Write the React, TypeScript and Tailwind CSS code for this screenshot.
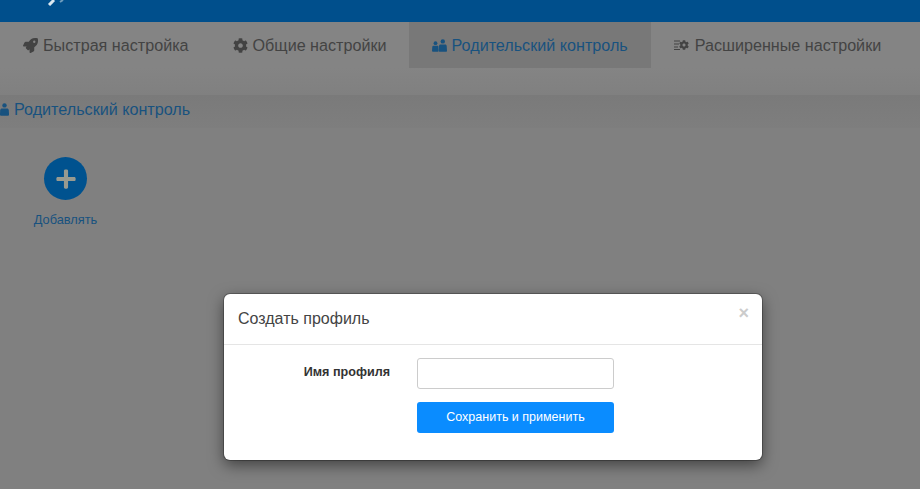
import { FaCog, FaPlus, FaRocket } from 'react-icons/fa';
import type { ReactNode } from 'react';

const FONT = "font-['Liberation_Sans',Arial,sans-serif]";

function AdvancedIcon() {
  return (
    <span className="flex w-[16px] shrink-0 items-center">
      <svg width="6" height="10" viewBox="0 0 6 10" fill="none">
        <path d="M0 1h6M0 4h5M0 7h4M0 9.5h6" stroke="currentColor" strokeWidth="1.2" />
      </svg>
      <FaCog className="-ml-px size-[10px]" />
    </span>
  );
}

function PersonIcon() {
  return (
    <svg width="9" height="13" viewBox="0 0 9 13" className="shrink-0" fill="currentColor">
      <circle cx="4.5" cy="2.4" r="2.2" />
      <path d="M2 5.4h5c1 0 1.6.7 1.8 1.7l.2 4.4c0 .8-.5 1.3-1.3 1.3H1.300C.5 12.800 0 12.300 0 11.500l.2-4.400C.4 6.100 1 5.400 2 5.400z" />
    </svg>
  );
}

function ParentsIcon() {
  return (
    <svg width="15" height="13" viewBox="0 0 15 13" className="shrink-0" fill="currentColor">
      <circle cx="3.500" cy="4.200" r="1.900" />
      <path d="M1.500 6.800h4c.5 0 .9.400.9 1l.2 4.200c0 .5-.3.800-.8.800H1c-.6 0-1-.3-1-.8l.3-4.200c.1-.6.500-1 1.200-1z" />
      <circle cx="10.800" cy="2.400" r="2.200" />
      <path d="M8.500 5.400h4.600c1 0 1.500.7 1.600 1.600l.3 4.700c0 .7-.4 1.100-1.100 1.100H7.900c-.7 0-1.100-.4-1.100-1.100l.2-4.700c.1-.9.600-1.600 1.500-1.600z" />
    </svg>
  );
}

interface TabProps {
  icon: ReactNode;
  label: string;
  active?: boolean;
  className?: string;
}

function Tab({ icon, label, active, className = 'pr-[23px]' }: TabProps) {
  return (
    <div
      className={`flex h-[46px] items-center gap-[5px] pl-[23px] text-[16.15px] ${className} ${
        active ? 'bg-[#787878] text-[#18527f]' : 'text-[#434343]'
      }`}
    >
      {icon}
      <span>{label}</span>
    </div>
  );
}

export default function App() {
  return (
    <div className={`relative h-[489px] w-[920px] overflow-hidden bg-[#808080] ${FONT}`}>
      {/* Top bar */}
      <div className="relative h-[22px] bg-[#004f8c]">
        <svg width="20" height="6" viewBox="0 0 20 6" className="absolute left-[46px] top-0">
          <path d="M3 5 L8 0" stroke="#dbe8f0" strokeWidth="3" />
          <path d="M14 2 L17 0" stroke="#6f9dbd" strokeWidth="2" />
        </svg>
      </div>

      {/* Tabs */}
      <div className="flex bg-[#848484]">
        <Tab icon={<FaRocket className="size-[15px] shrink-0" />} label="Быстрая настройка" className="pr-[21px]" />
        <Tab icon={<FaCog className="size-[15px] shrink-0" />} label="Общие настройки" className="pr-[22px]" />
        <Tab icon={<ParentsIcon />} label="Родительский контроль" active />
        <Tab icon={<AdvancedIcon />} label="Расширенные настройки" />
      </div>

      {/* Section header */}
      <div className="h-[27px] bg-gradient-to-b from-[#848484] to-[#808080]" />
      <div className="flex h-[33px] items-center gap-[6px] bg-gradient-to-b from-[#7a7a7a] to-[#7e7e7e] pb-[5px] text-[16.15px] text-[#18527f]">
        <PersonIcon />
        <span className="-ml-px">Родительский контроль</span>
      </div>

      {/* Add button */}
      <div className="mt-[29px] flex w-[131px] flex-col items-center">
        <div className="flex size-[43px] items-center justify-center rounded-full bg-[#00528f]">
          <FaPlus className="size-[22px] text-[#989a90]" />
        </div>
        <span className="mt-[12px] text-[12.8px] leading-[16px] text-[#18527f]">Добавлять</span>
      </div>

      {/* Modal */}
      <div className="absolute left-[224px] top-[294px] h-[166px] w-[538px] rounded-[6px] bg-white shadow-[0_0_0_1px_rgba(0,0,0,0.25),0_5px_15px_rgba(0,0,0,0.5)]">
        <div className="flex h-[51px] items-start justify-between border-b border-[#e5e5e5] pl-[14px] pr-[13px]">
          <span className="mt-[15px] text-[16px] leading-[20px] text-[#444444]">Создать профиль</span>
          <span className="mt-[9px] text-[18px] font-bold leading-[20px] text-[#cccccc]">×</span>
        </div>
        <div className="flex pt-[13px]">
          <label className="mt-[5px] w-[166px] text-right text-[12.6px] font-bold leading-[18px] text-[#333333]">
            Имя профиля
          </label>
          <div className="ml-[27px] flex w-[197px] flex-col gap-[13px]">
            <input className="h-[31px] w-full rounded-[3px] border border-[#cccccc] bg-white outline-none" />
            <button className="h-[31px] w-full rounded-[3px] bg-[#0a8cff] text-[12.5px] text-white">
              Сохранить и применить
            </button>
          </div>
        </div>
      </div>
    </div>
  );
}
